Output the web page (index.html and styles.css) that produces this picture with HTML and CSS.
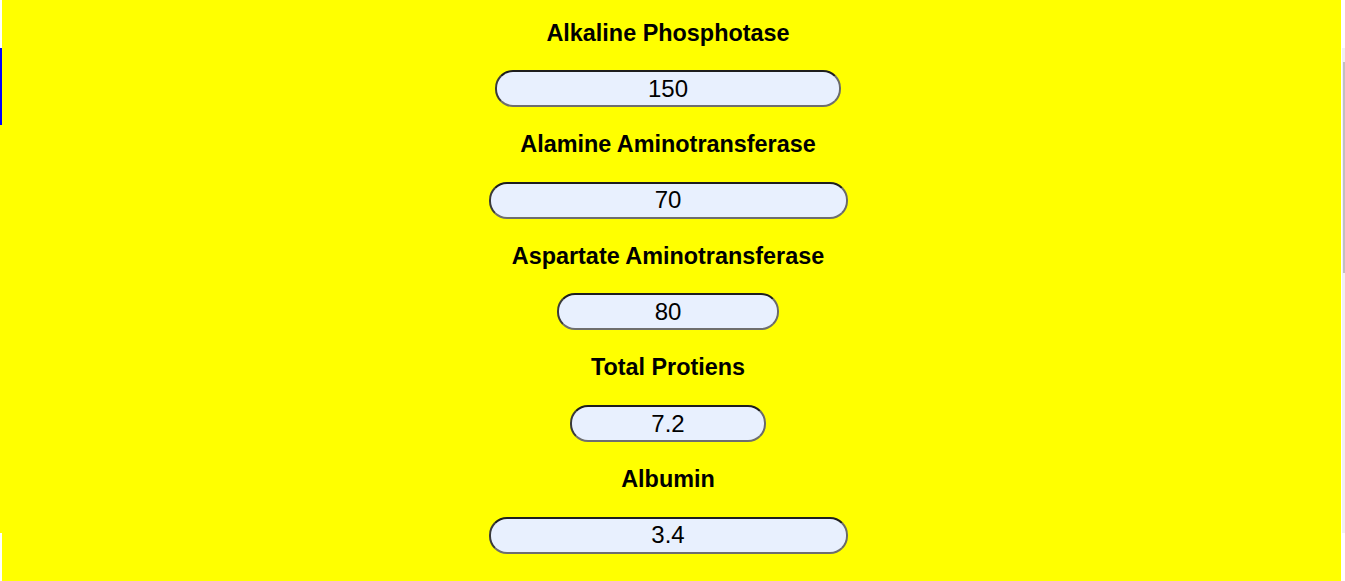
FILE: index.html
```html
<!DOCTYPE html>
<html lang="en">
<head>
<meta charset="utf-8">
<title>Liver Function Test</title>
<link rel="stylesheet" href="styles.css">
</head>
<body>
<div class="page">
  <div class="edge-left">
    <div class="seg seg-white-top"></div>
    <div class="seg seg-blue"></div>
    <div class="seg seg-yellow"></div>
    <div class="seg seg-white-bottom"></div>
  </div>
  <main class="main">
    <form class="form">
      <label class="field-label" for="alp">Alkaline Phosphotase</label>
      <input class="field w-alp" id="alp" type="text" value="150">
      <label class="field-label" for="alt">Alamine Aminotransferase</label>
      <input class="field w-alt" id="alt" type="text" value="70">
      <label class="field-label" for="ast">Aspartate Aminotransferase</label>
      <input class="field w-ast" id="ast" type="text" value="80">
      <label class="field-label" for="tp">Total Protiens</label>
      <input class="field w-tp" id="tp" type="text" value="7.2">
      <label class="field-label" for="alb">Albumin</label>
      <input class="field w-alb" id="alb" type="text" value="3.4">
    </form>
  </main>
  <div class="edge-right">
    <div class="track-top"></div>
    <div class="track">
      <div class="thumb"></div>
    </div>
    <div class="track-bottom"></div>
  </div>
</div>
</body>
</html>
```

FILE: styles.css
```css
html, body {
  margin: 0;
  padding: 0;
  background: #ffffff;
  overflow: hidden;
}

.page {
  display: flex;
  width: 1345px;
  height: 581px;
}

.edge-left {
  width: 2px;
  display: flex;
  flex-direction: column;
}

.seg-white-top { height: 48px; background: #ffffff; }
.seg-blue { height: 77px; background: #0000ff; }
.seg-yellow { height: 408px; background: #ffff00; }
.seg-white-bottom { flex: 1; background: #ffffff; }

.main {
  flex: 1;
  background: #ffff00;
  padding-right: 7px;
}

.form {
  display: flex;
  flex-direction: column;
  align-items: center;
  gap: 23.8px;
  padding-top: 19.5px;
}

.field-label {
  font-family: "Liberation Sans", Arial, sans-serif;
  font-weight: bold;
  font-size: 23.4px;
  line-height: 27px;
  color: #000000;
  text-align: center;
}

.field {
  box-sizing: border-box;
  height: 37px;
  border-style: solid;
  border-width: 2px;
  border-color: #1e1e1e #6a6a6a #6e6e6e #3a3a3a;
  border-radius: 18px;
  background: #e8f0fe;
  font-family: "Liberation Sans", Arial, sans-serif;
  font-size: 24px;
  color: #000000;
  text-align: center;
  padding: 0 10px;
  outline: none;
}

.w-alp { width: 346px; }
.w-alt { width: 359px; }
.w-ast { width: 222px; }
.w-tp { width: 196px; }
.w-alb { width: 359px; }

.edge-right {
  width: 4px;
  display: flex;
  flex-direction: column;
}

.track-top { height: 48px; background: #ffffff; }
.track {
  height: 485px;
  background: #f1f1f1;
  border-left: 1px solid #ffffff;
  position: relative;
}
.thumb {
  position: absolute;
  left: 1px;
  top: 14px;
  width: 2px;
  height: 211px;
  background: #c1c1c1;
}
.track-bottom { flex: 1; background: #ffffff; }
```
